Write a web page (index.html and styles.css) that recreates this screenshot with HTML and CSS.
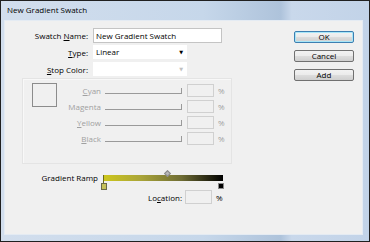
FILE: index.html
```html
<!DOCTYPE html>
<html lang="en">
<head>
    <meta charset="UTF-8">
    <title>New Gradient Swatch</title>
    <link rel="stylesheet" href="styles.css">
</head>
<body>
    <div class="window">
        <div class="titlebar">New Gradient Swatch</div>
        <div class="client">
            <div class="form">
                <div class="row">
                    <label class="row-label">Swatch <u>N</u>ame:</label>
                    <div class="field field-name">New Gradient Swatch</div>
                </div>
                <div class="row row-type">
                    <label class="row-label"><u>T</u>ype:</label>
                    <div class="field field-select">Linear<span class="arrow">&#9660;</span></div>
                </div>
                <div class="row row-stop">
                    <label class="row-label"><u>S</u>top Color:</label>
                    <div class="field field-select"><span class="arrow off">&#9660;</span></div>
                </div>

                <div class="panel">
                    <div class="swatch"></div>
                    <div class="inks">
                        <span class="ink-label"><u>C</u>yan</span>
                        <span class="slider"></span>
                        <span class="num"></span>
                        <span class="pct">%</span>

                        <span class="ink-label">Magenta</span>
                        <span class="slider"></span>
                        <span class="num"></span>
                        <span class="pct">%</span>

                        <span class="ink-label"><u>Y</u>ellow</span>
                        <span class="slider"></span>
                        <span class="num"></span>
                        <span class="pct">%</span>

                        <span class="ink-label"><u>B</u>lack</span>
                        <span class="slider"></span>
                        <span class="num"></span>
                        <span class="pct">%</span>
                    </div>
                </div>

                <div class="ramp-row">
                    <label class="ramp-label">Gradient Ramp</label>
                    <div class="ramp">
                        <span class="ramp-bar"></span>
                        <span class="mid"></span>
                        <span class="stop stop-left"></span>
                        <span class="stop stop-right"></span>
                    </div>
                </div>
                <div class="loc-row">
                    <label class="loc-label">Lo<u>c</u>ation:</label>
                    <span class="num num-loc"></span>
                    <span class="pct pct-loc">%</span>
                </div>
            </div>
            <div class="buttons">
                <button class="btn btn-default">OK</button>
                <button class="btn">Cancel</button>
                <button class="btn">Add</button>
            </div>
        </div>
    </div>
</body>
</html>
```

FILE: styles.css
```css
        html, body {
            margin: 0;
            padding: 0;
        }
        body {
            font-family: "Open Sans", "DejaVu Sans", sans-serif;
            font-size: 8px;
            color: #000;
            background: #000;
        }
        .window {
            box-sizing: border-box;
            width: 370px;
            height: 242px;
            border: 1px solid #202020;
            padding: 0 6px 6px 3px;
            background: linear-gradient(to right, #d2deed 0%, #c6d7ea 55%, #aec3db 76%, #c9d8eb 79%, #c2d3e8 100%);
            display: flex;
            flex-direction: column;
        }
        .titlebar {
            height: 19px;
            line-height: 18px;
            padding-left: 3px;
            font-size: 8px;
            color: #000;
        }
        .client {
            flex: 1;
            display: flex;
            background: #f0f0f0;
            border: 1px solid #e4ebf3;
        }

        /* left side */
        .form {
            width: 289px;
            padding-top: 7px;
        }
        .row {
            display: flex;
            align-items: center;
            height: 15px;
        }
        .row-type {
            height: 14px;
            margin-top: 2px;
        }
        .row-stop {
            height: 14px;
            margin-top: 3px;
        }
        .row-label {
            box-sizing: border-box;
            width: 88px;
            padding-right: 5px;
            text-align: right;
        }
        .field {
            box-sizing: border-box;
            height: 100%;
            background: #fff;
            line-height: 13px;
            padding-left: 3px;
        }
        .field-name {
            width: 129px;
            border: 1px solid #c4c4c4;
            padding-left: 2px;
        }
        .field-select {
            position: relative;
            width: 94px;
        }
        .arrow {
            position: absolute;
            right: 4px;
            top: 0;
            font-size: 5px;
            line-height: 14px;
        }
        .arrow.off {
            color: #c0c0c0;
        }

        .panel {
            box-sizing: border-box;
            display: flex;
            width: 210px;
            height: 86px;
            margin: 2px 0 0 17px;
            padding-top: 3px;
            border: 1px solid #e4e4e4;
            box-shadow: inset 1px 1px 0 #f8f8f8;
        }
        .swatch {
            box-sizing: border-box;
            width: 25px;
            height: 24px;
            margin: 1px 0 0 9px;
            border: 1px solid #8c8c8c;
        }
        .inks {
            display: grid;
            grid-template-columns: 44px 77px 27px auto;
            grid-auto-rows: 16px;
            column-gap: 4px;
            align-items: center;
            color: #a0a0a0;
        }
        .ink-label {
            text-align: right;
        }
        .slider {
            position: relative;
            height: 5px;
            margin-top: 1px;
            border-bottom: 1px solid #9a9a9a;
            border-right: 1px solid #9a9a9a;
        }
        .num {
            box-sizing: border-box;
            display: block;
            width: 27px;
            height: 13px;
            margin-left: 1px;
            border: 1px solid #d0d0d0;
            background: #f0f0f0;
        }
        .pct {
            margin-left: 1px;
        }

        .ramp-row {
            display: flex;
            height: 16px;
            margin-top: 9px;
        }
        .ramp-label {
            box-sizing: border-box;
            width: 98px;
            padding-right: 5px;
            text-align: right;
            line-height: 10px;
        }
        .ramp {
            position: relative;
            width: 120px;
            height: 16px;
        }
        .ramp-bar {
            position: absolute;
            left: 0;
            top: 2px;
            width: 119px;
            height: 6px;
            background: linear-gradient(to right, #cdc61c 0%, #aba638 30%, #6f6d34 65%, #000 100%);
            border-left: 1px solid #6a6a20;
        }
        .ramp-bar::after {
            content: "";
            position: absolute;
            left: -1px;
            top: 6px;
            width: 1px;
            height: 3px;
            background: #6a6a20;
        }
        .mid {
            position: absolute;
            left: 62px;
            top: -2px;
            width: 3px;
            height: 3px;
            background: #b8b8b8;
            border: 1px solid #8a8a8a;
            transform: rotate(45deg);
        }
        .stop {
            position: absolute;
            top: 10px;
            box-sizing: border-box;
            width: 6px;
            height: 7px;
            border: 1px solid #6a6a4a;
        }
        .stop-left {
            left: -2px;
            background: #c6c15a;
        }
        .stop-right {
            left: 115px;
            height: 6px;
            background: #000;
            border-color: #8a8a8a;
        }

        .loc-row {
            display: flex;
            align-items: center;
            height: 14px;
            margin-top: 1px;
        }
        .loc-label {
            box-sizing: border-box;
            width: 180px;
            padding-right: 3px;
            text-align: right;
        }
        .num-loc {
            height: 14px;
            margin-left: 0;
        }
        .pct-loc {
            margin-left: 4px;
        }

        /* right side */
        .buttons {
            display: flex;
            flex-direction: column;
            gap: 7px;
            padding-top: 10px;
        }
        .btn {
            box-sizing: border-box;
            width: 60px;
            height: 12px;
            padding: 0;
            font-family: inherit;
            font-size: 8px;
            line-height: 10px;
            color: #000;
            border: 1px solid #707070;
            border-radius: 2px;
            background: linear-gradient(#f2f2f2 0%, #ebebeb 50%, #dddddd 51%, #cfcfcf 100%);
        }
        .btn-default {
            border-color: #3c7fb1;
            box-shadow: inset 0 0 0 1px #a8e6f8;
        }
```
